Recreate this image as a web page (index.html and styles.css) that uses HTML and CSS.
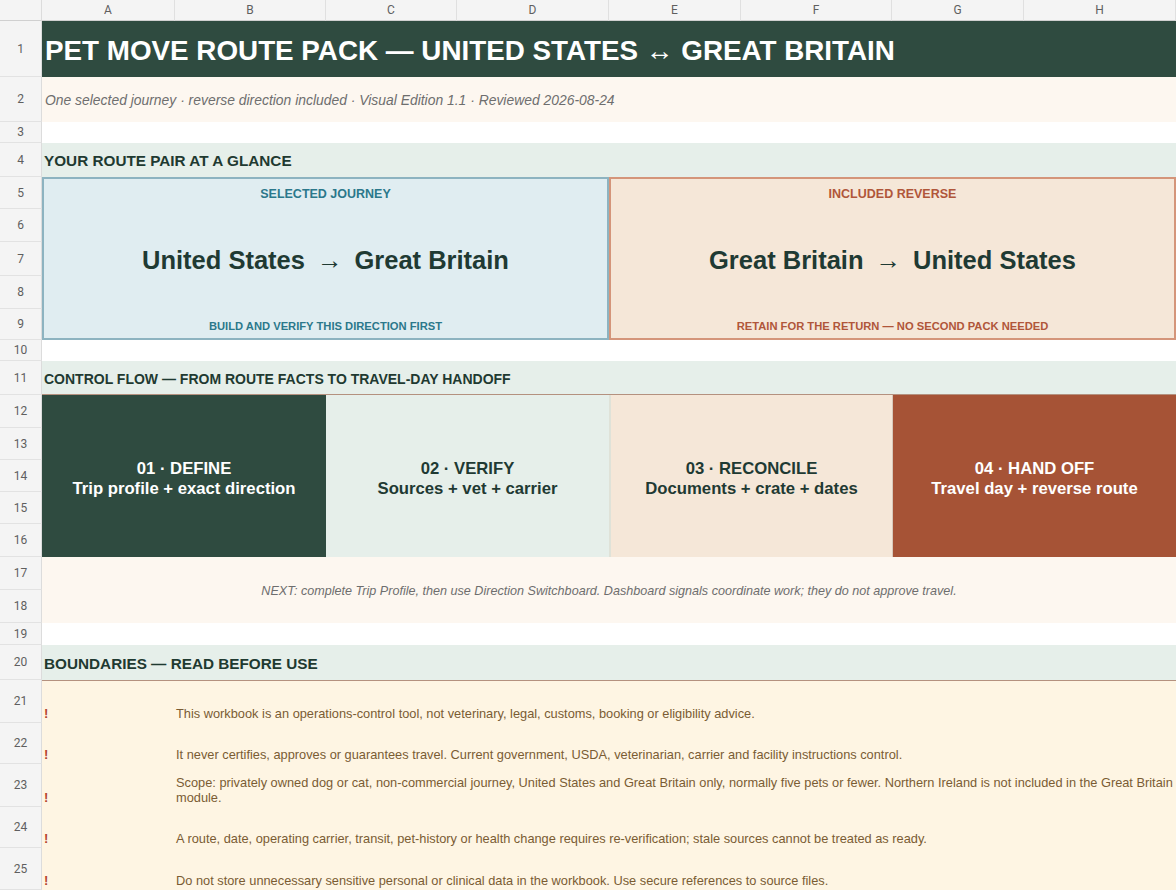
FILE: index.html
```html
<!DOCTYPE html>
<html lang="en">
<head>
    <meta charset="UTF-8">
    <meta name="viewport" content="width=device-width, initial-scale=1.0">
    <title>Pet Move Route Pack - Overview</title>
    <link rel="stylesheet" href="styles.css">
</head>
<body>
    <div class="sheet">
        <!-- column letters -->
        <div class="corner"></div>
        <div class="col-head">A</div>
        <div class="col-head">B</div>
        <div class="col-head">C</div>
        <div class="col-head">D</div>
        <div class="col-head">E</div>
        <div class="col-head">F</div>
        <div class="col-head">G</div>
        <div class="col-head">H</div>

        <div class="row-head">1</div>
        <div class="cell title">PET MOVE ROUTE PACK — UNITED STATES ↔ GREAT BRITAIN</div>

        <div class="row-head">2</div>
        <div class="cell subtitle">One selected journey · reverse direction included · Visual Edition 1.1 · Reviewed 2026-08-24</div>

        <div class="row-head">3</div>
        <div class="cell blank"></div>

        <div class="row-head">4</div>
        <div class="cell section">YOUR ROUTE PAIR AT A GLANCE</div>

        <!-- route pair: two merged blocks over rows 5-9 -->
        <div class="row-head">5</div>
        <div class="route route-out">
            <div class="route-label">SELECTED JOURNEY</div>
            <div class="route-name">United States <span class="arrow">→</span> Great Britain</div>
            <div class="route-note">BUILD AND VERIFY THIS DIRECTION FIRST</div>
        </div>
        <div class="route route-back">
            <div class="route-label">INCLUDED REVERSE</div>
            <div class="route-name">Great Britain <span class="arrow">→</span> United States</div>
            <div class="route-note">RETAIN FOR THE RETURN — NO SECOND PACK NEEDED</div>
        </div>
        <div class="row-head">6</div>
        <div class="row-head">7</div>
        <div class="row-head">8</div>
        <div class="row-head">9</div>

        <div class="row-head">10</div>
        <div class="cell blank"></div>

        <div class="row-head">11</div>
        <div class="cell section section-sm">CONTROL FLOW — FROM ROUTE FACTS TO TRAVEL-DAY HANDOFF</div>

        <!-- four steps over rows 12-16 -->
        <div class="row-head">12</div>
        <div class="step step-define">01 · DEFINE<br>Trip profile + exact direction</div>
        <div class="step step-verify">02 · VERIFY<br>Sources + vet + carrier</div>
        <div class="step step-reconcile">03 · RECONCILE<br>Documents + crate + dates</div>
        <div class="step step-handoff">04 · HAND OFF<br>Travel day + reverse route</div>
        <div class="row-head">13</div>
        <div class="row-head">14</div>
        <div class="row-head">15</div>
        <div class="row-head">16</div>

        <div class="row-head">17</div>
        <div class="cell next">NEXT: complete Trip Profile, then use Direction Switchboard. Dashboard signals coordinate work; they do not approve travel.</div>
        <div class="row-head">18</div>

        <div class="row-head">19</div>
        <div class="cell blank"></div>

        <div class="row-head">20</div>
        <div class="cell section">BOUNDARIES — READ BEFORE USE</div>

        <div class="row-head">21</div>
        <div class="cell mark first">!</div>
        <div class="cell rule first">This workbook is an operations-control tool, not veterinary, legal, customs, booking or eligibility advice.</div>

        <div class="row-head">22</div>
        <div class="cell mark">!</div>
        <div class="cell rule">It never certifies, approves or guarantees travel. Current government, USDA, veterinarian, carrier and facility instructions control.</div>

        <div class="row-head">23</div>
        <div class="cell mark">!</div>
        <div class="cell rule">Scope: privately owned dog or cat, non-commercial journey, United States and Great Britain only, normally five pets or fewer. Northern Ireland is not included in the Great Britain module.</div>

        <div class="row-head">24</div>
        <div class="cell mark">!</div>
        <div class="cell rule">A route, date, operating carrier, transit, pet-history or health change requires re-verification; stale sources cannot be treated as ready.</div>

        <div class="row-head">25</div>
        <div class="cell mark">!</div>
        <div class="cell rule">Do not store unnecessary sensitive personal or clinical data in the workbook. Use secure references to source files.</div>
    </div>
</body>
</html>
```

FILE: styles.css
```css
body {
    margin: 0;
    background-color: #fff;
    font-family: "Liberation Sans", Arial, sans-serif;
    overflow: hidden;
}

.sheet {
    display: grid;
    grid-template-columns: 42px 133px 151px 131px 152px 132px 151px 132px 152px;
    grid-template-rows:
        21px 56px 45px 21px 34px
        32px 33px 34px 33px 31px
        21px 34px
        33px 32px 32px 32px 33px
        33px 33px 22px 35px
        43px 41px 43px 41px 42px;
    width: 1176px;
}

/* headers */

.corner,
.col-head,
.row-head {
    background-color: #f4f4f4;
    color: #5f5f5f;
    font-family: Roboto, "Liberation Sans", sans-serif;
    font-size: 12px;
    display: flex;
    align-items: center;
    justify-content: center;
    box-sizing: border-box;
}

.corner {
    border-right: 1px solid #dcdcdc;
    border-bottom: 1px solid #d0d0d0;
}

.col-head {
    border-right: 1px solid #e0e0e0;
    border-bottom: 1px solid #d0d0d0;
}

.row-head {
    grid-column: 1;
    border-right: 1px solid #dcdcdc;
    border-bottom: 1px solid #e2e2e2;
}

/* plain cells */

.cell {
    grid-column: span 8;
    display: flex;
    align-items: center;
    box-sizing: border-box;
    padding: 0 3px;
    min-width: 0;
}

.title {
    background-color: #2f4b40;
    color: #fff;
    font-size: 27.8px;
    font-weight: bold;
    padding-top: 3px;
}

.subtitle {
    background-color: #fdf7f0;
    color: #6e6e6e;
    font-size: 13.9px;
    font-style: italic;
}

.section {
    background-color: #e6efea;
    color: #1f3a31;
    font-size: 15.3px;
    font-weight: bold;
    padding-left: 2px;
    padding-top: 2px;
}

.section-sm {
    font-size: 14px;
    border-bottom: 1px solid #b4917f;
}

/* route pair */

.route {
    grid-column: span 4;
    grid-row: span 5;
    display: grid;
    grid-template-rows: 30px 1fr 25px;
    box-sizing: border-box;
    text-align: center;
    font-weight: bold;
}

.route-out {
    background-color: #e0edf1;
    border: 2px solid #8db3c0;
    color: #2b788b;
}

.route-back {
    background-color: #f5e7d8;
    border: 2px solid #d4957a;
    color: #b0563a;
}

.route-label,
.route-note,
.route-name {
    display: flex;
    align-items: center;
    justify-content: center;
}

.route-label {
    font-size: 12.5px;
}

.route-note {
    font-size: 11.2px;
}

.route-name {
    color: #1f3a33;
    font-size: 25.5px;
    padding-bottom: 2px;
}

.arrow {
    font-weight: normal;
    margin: 0 12px;
}

/* control flow */

.step {
    grid-column: span 2;
    grid-row: span 5;
    display: flex;
    align-items: center;
    justify-content: center;
    text-align: center;
    font-size: 16.7px;
    font-weight: bold;
    line-height: 20px;
    padding-top: 5px;
    box-sizing: border-box;
}

.step-define {
    background-color: #2f4b40;
    color: #fff;
}

.step-verify {
    background-color: #e6efea;
    color: #1f3a33;
}

.step-reconcile {
    background-color: #f5e7d8;
    color: #1f3a33;
    border-left: 2px solid #dfe2d8;
}

.step-handoff {
    background-color: #a65336;
    color: #fff;
    border-left: 1px solid #d8c9bb;
}

.next {
    grid-row: span 2;
    justify-content: center;
    background-color: #fdf7f0;
    color: #6e6e6e;
    font-size: 12.6px;
    font-style: italic;
    padding-top: 2px;
}

.blank {
    background-color: #fff;
}

/* boundaries */

.mark,
.rule {
    background-color: #fef5e3;
    align-items: flex-end;
    padding-bottom: 2px;
    font-size: 12.8px;
    line-height: 15px;
}

.mark.first,
.rule.first {
    border-top: 1px solid #b4917f;
}

.mark {
    grid-column: span 1;
    color: #b5452e;
    font-weight: bold;
    font-size: 13px;
    padding-left: 2px;
}

.rule {
    grid-column: span 7;
    color: #7a5c33;
    padding-left: 1px;
}
```
